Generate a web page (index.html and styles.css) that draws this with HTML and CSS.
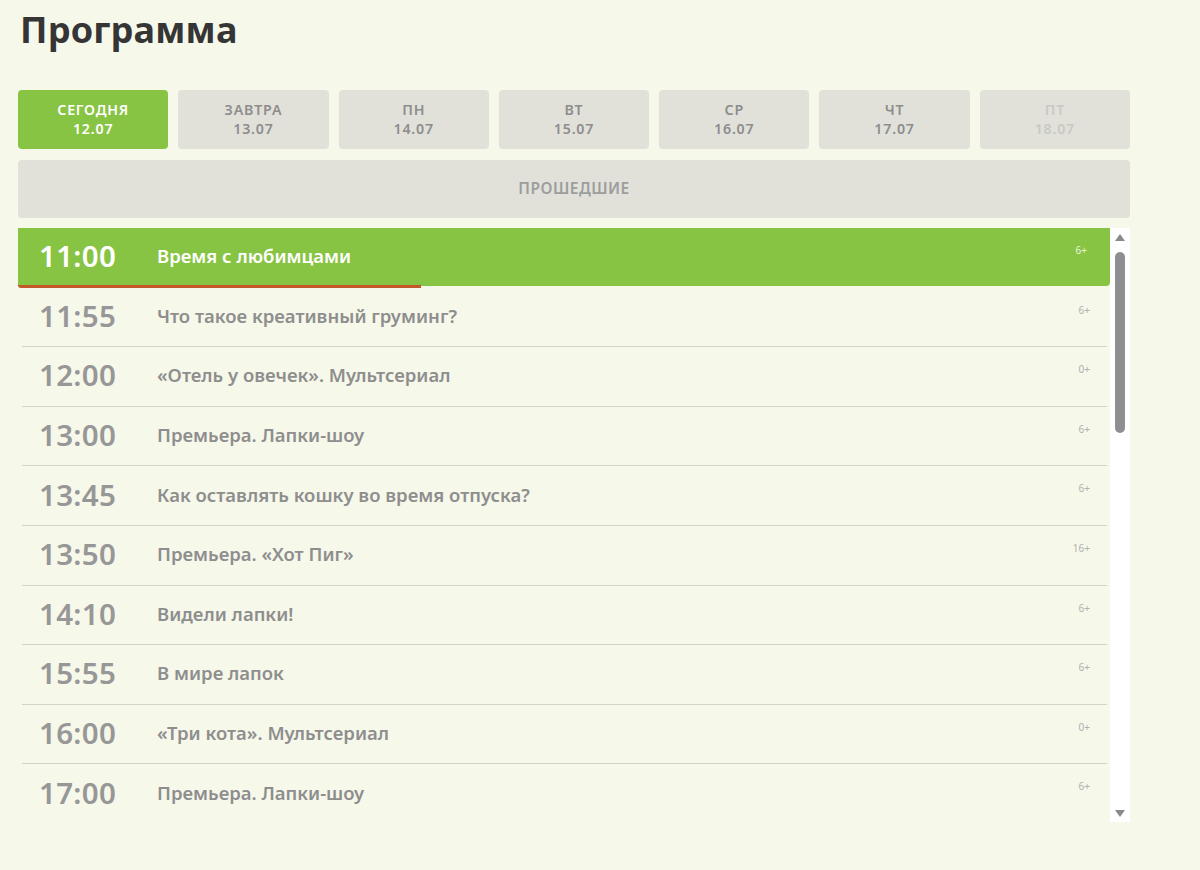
FILE: index.html
```html
<!DOCTYPE html>
<html lang="ru">
<head>
<meta charset="utf-8">
<title>Программа</title>
<link rel="stylesheet" href="styles.css">
</head>
<body>
<main class="page">
  <h1 class="title">Программа</h1>
  <nav class="days">
    <button class="day day--active"><span>СЕГОДНЯ</span><span>12.07</span></button>
    <button class="day"><span>ЗАВТРА</span><span>13.07</span></button>
    <button class="day"><span>ПН</span><span>14.07</span></button>
    <button class="day"><span>ВТ</span><span>15.07</span></button>
    <button class="day"><span>СР</span><span>16.07</span></button>
    <button class="day"><span>ЧТ</span><span>17.07</span></button>
    <button class="day day--disabled"><span>ПТ</span><span>18.07</span></button>
  </nav>
  <button class="past">ПРОШЕДШИЕ</button>
  <section class="schedule">
    <ul class="list">
      <li class="row row--now"><span class="time">11:00</span><span class="name">Время с любимцами</span><span class="age">6+</span><span class="progress" style="width:36.9%"></span></li>
      <li class="row"><span class="time">11:55</span><span class="name">Что такое креативный груминг?</span><span class="age">6+</span></li>
      <li class="row"><span class="time">12:00</span><span class="name">«Отель у овечек». Мультсериал</span><span class="age">0+</span></li>
      <li class="row"><span class="time">13:00</span><span class="name">Премьера. Лапки-шоу</span><span class="age">6+</span></li>
      <li class="row"><span class="time">13:45</span><span class="name">Как оставлять кошку во время отпуска?</span><span class="age">6+</span></li>
      <li class="row"><span class="time">13:50</span><span class="name">Премьера. «Хот Пиг»</span><span class="age">16+</span></li>
      <li class="row"><span class="time">14:10</span><span class="name">Видели лапки!</span><span class="age">6+</span></li>
      <li class="row"><span class="time">15:55</span><span class="name">В мире лапок</span><span class="age">6+</span></li>
      <li class="row"><span class="time">16:00</span><span class="name">«Три кота». Мультсериал</span><span class="age">0+</span></li>
      <li class="row"><span class="time">17:00</span><span class="name">Премьера. Лапки-шоу</span><span class="age">6+</span></li>
    </ul>
    <div class="scrollbar">
      <span class="arrow arrow--up"></span>
      <div class="track"><span class="thumb"></span></div>
      <span class="arrow arrow--down"></span>
    </div>
  </section>
</main>
</body>
</html>
```
FILE: styles.css
```css
* { box-sizing: border-box; }
html, body { margin: 0; padding: 0; }
body {
  background: #f6f8ea;
  font-family: "Noto Sans", "Open Sans", sans-serif;
  color: #8c8c8c;
}
.page {
  width: 1112px;
  margin-left: 18px;
  padding-top: 6px;
}
.title {
  margin: 0 0 0 2px;
  font-size: 36px;
  line-height: 48px;
  font-weight: 700;
  color: #353535;
  letter-spacing: 0.2px;
}
.days {
  margin-top: 36px;
  display: grid;
  grid-template-columns: repeat(7, 1fr);
  gap: 10px;
}
.day {
  height: 59px;
  border: 0;
  border-radius: 4px;
  background: #e1e1da;
  color: #8d8d8d;
  font-family: inherit;
  font-size: 14.2px;
  font-weight: 600;
  letter-spacing: 0.8px;
  line-height: 19.5px;
  display: flex;
  flex-direction: column;
  align-items: center;
  justify-content: center;
  padding: 0 0 1px;
}
.day--active { background: #88c443; color: #fff; }
.day--disabled { color: #c9c9c2; }
.past {
  display: block;
  width: 100%;
  height: 58px;
  margin-top: 11px;
  border: 0;
  border-radius: 4px;
  background: #e1e1da;
  color: #9d9d9d;
  font-family: inherit;
  font-size: 15.5px;
  font-weight: 600;
  letter-spacing: 0.5px;
  padding: 0 0 2px;
}
.schedule {
  margin-top: 10px;
  display: flex;
  height: 594px;
}
.list {
  list-style: none;
  margin: 0;
  padding: 0;
  flex: 1;
}
.row {
  position: relative;
  display: flex;
  align-items: center;
  height: 59.6px;
  margin: 0 3px 0 4px;
  padding-bottom: 3px;
  border-bottom: 1px solid #d3d4c8;
}
.row--now {
  margin: 0;
  height: 58px;
  background: #88c443;
  border-bottom: 0;
  border-radius: 0 0 4px 0;
  color: #fff;
  padding-left: 4px;
  padding-right: 3px;
  margin-bottom: 1.6px;
}
.time {
  width: 135px;
  padding-left: 17px;
  font-size: 29.5px;
  font-weight: 600;
  letter-spacing: 0.3px;
  color: #979797;
}
.name {
  flex: 1;
  font-size: 18.5px;
  font-weight: 600;
  color: #8e8e8e;
}
.row--now .time, .row--now .name { color: #fff; }
.age {
  font-size: 10px;
  color: #b0b0b0;
  margin-right: 17px;
  align-self: flex-start;
  margin-top: 15px;
}
.row--now .age { color: #e8f5d4; margin-right: 20px; }
.progress {
  position: absolute;
  left: 0;
  bottom: -2px;
  height: 3px;
  background: #c2582a;
  border-radius: 0 0 0 3px;
}
.scrollbar {
  width: 20px;
  background: #ffffff;
  display: flex;
  flex-direction: column;
  align-items: center;
  padding: 6px 0 5px;
}
.arrow {
  width: 0;
  height: 0;
  border-left: 5px solid transparent;
  border-right: 5px solid transparent;
}
.arrow--up { border-bottom: 7px solid #8a8a8e; }
.arrow--down { border-top: 7px solid #8a8a8e; }
.track { flex: 1; width: 100%; display: flex; justify-content: center; padding-top: 11px; }
.thumb {
  display: block;
  width: 10px;
  height: 181px;
  border-radius: 5px;
  background: #8f8f93;
}
```
